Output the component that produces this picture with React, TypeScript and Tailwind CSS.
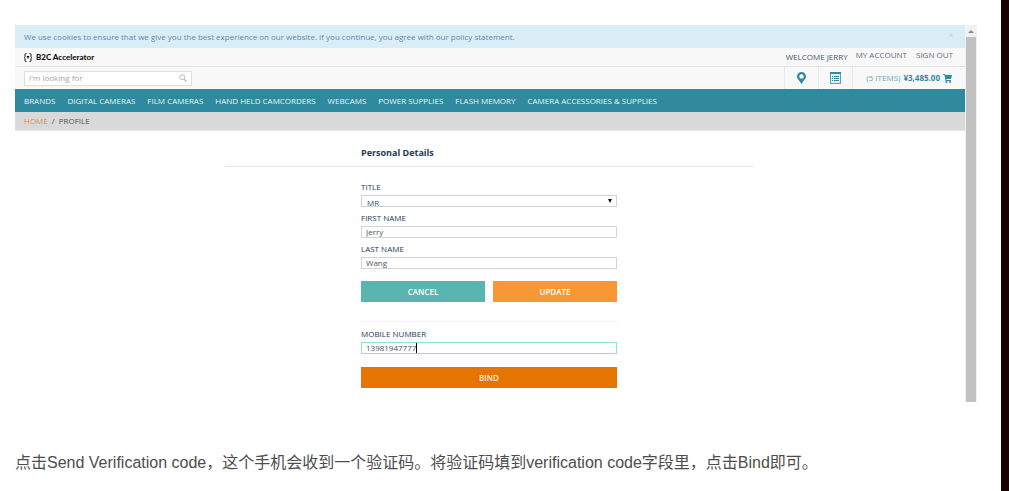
import React, { useState } from 'react';

const categories = [
  'BRANDS',
  'DIGITAL CAMERAS',
  'FILM CAMERAS',
  'HAND HELD CAMCORDERS',
  'WEBCAMS',
  'POWER SUPPLIES',
  'FLASH MEMORY',
  'CAMERA ACCESSORIES & SUPPLIES',
];

const LogoIcon: React.FC = () => (
  <svg viewBox="0 0 16 18" className="w-2 h-[9px]" fill="none" stroke="#111" strokeWidth="2">
    <path d="M5 1H4Q2 1 2 3V7L1 9L2 11V15Q2 17 4 17H5M11 1H12Q14 1 14 3V7L15 9L14 11V15Q14 17 12 17H11" />
    <path d="M5 6H11L8 12Z" fill="#111" stroke="none" />
  </svg>
);

const SearchIcon: React.FC = () => (
  <svg viewBox="0 0 16 16" className="w-2 h-2" fill="none" stroke="#b5b5b5" strokeWidth="1.8">
    <circle cx="6.500" cy="6.500" r="5" />
    <path d="M10.200 10.200L15 15" strokeWidth="2.400" />
  </svg>
);

const PinIcon: React.FC = () => (
  <svg viewBox="0 0 18 24" className="w-[9px] h-3" fill="#2f8a9f">
    <path fillRule="evenodd" d="M9 0A9 9 0 0 0 0 9C0 14 6 18 9 24C12 18 18 14 18 9A9 9 0 0 0 9 0ZM9 4.500A4.500 4.500 0 1 1 9 13.500A4.500 4.500 0 0 1 9 4.500Z" />
  </svg>
);

const ListIcon: React.FC = () => (
  <svg viewBox="0 0 22 24" className="w-[11px] h-3">
    <rect x="1" y="1" width="20" height="22" fill="#e3f0f3" stroke="#5aa2b3" strokeWidth="2" />
    <rect width="22" height="4" fill="#2f8a9f" />
    <path d="M4 9H6M4 13H6M4 17H6M8 9H18M8 13H18M8 17H18" stroke="#2f8a9f" strokeWidth="2" />
  </svg>
);

const CartIcon: React.FC = () => (
  <svg viewBox="0 0 18 18" className="w-[9px] h-[9px]" fill="#2f8a9f">
    <path d="M0 0H4L5 2H18L16 10H6.500L7 12H16V14H5L3 2H0Z" />
    <circle cx="7" cy="16" r="2" />
    <circle cx="14" cy="16" r="2" />
  </svg>
);

interface FieldProps {
  id: string;
  label: string;
  children: React.ReactNode;
}

const Field: React.FC<FieldProps> = ({ id, label, children }) => (
  <div className="flex flex-col">
    <label htmlFor={id} className="h-[17px] leading-[18px] text-[#1f3a55]">{label}</label>
    {children}
  </div>
);

const inputClass = 'block w-full h-3 px-1 pb-[2px] border bg-white leading-[10px] text-[#44525f] outline-none';

const Header: React.FC = () => (
  <header>
    <div className="flex items-center justify-between h-[23px] pl-[9px] pr-3 bg-[#d9edf7] text-[#5f8aa8]">
      <p>We use cookies to ensure that we give you the best experience on our website. If you continue, you agree with our policy statement.</p>
      <button type="button" aria-label="Close" className="pb-1 text-[#b3cbd9]">×</button>
    </div>
    <div className="flex items-center justify-between h-[19px] pl-[9px] pr-3 bg-[#f8f8f8] border-b border-[#e3e3e3]">
      <a href="#" className="flex items-center gap-1 font-['Lato'] font-black text-[#111]">
        <LogoIcon />
        B2C Accelerator
      </a>
      <div className="flex items-center text-[#5d6b7c]">
        <span className="text-[#44566a]">WELCOME JERRY</span>
        <a href="#" className="ml-2 pb-1">MY ACCOUNT</a>
        <a href="#" className="ml-[9px] pb-1">SIGN OUT</a>
      </div>
    </div>
    <div className="flex items-stretch justify-between h-[22px] pl-[9px] bg-[#f8f8f8]">
      <div className="flex items-center self-center w-[168px] h-[15px] px-1 border border-[#dedede] bg-white">
        <input
          type="text"
          aria-label="Search"
          placeholder="I'm looking for"
          className="flex-1 min-w-0 h-[13px] pb-[2px] outline-none placeholder:text-[#a5a5a5]"
        />
        <button type="button" aria-label="Submit search"><SearchIcon /></button>
      </div>
      <div className="flex text-[#2f8a9f]">
        <a href="#" aria-label="Store finder" className="flex items-center justify-center w-[34px] border-l border-[#e8e8e8]"><PinIcon /></a>
        <a href="#" aria-label="Quick order" className="flex items-center justify-center w-[34px] border-l border-[#e8e8e8]"><ListIcon /></a>
        <a href="#" className="flex items-center justify-end gap-[3px] w-[113px] pr-[13px] border-l border-[#e8e8e8]">
          <span className="text-[#65a8b8]">(5 ITEMS)</span>
          <span className="font-bold">¥3,485.00</span>
          <CartIcon />
        </a>
      </div>
    </div>
    <nav className="flex items-center gap-3 h-[23px] px-[9px] bg-[#2f8a9f] text-[#e6f3f5] whitespace-nowrap">
      {categories.map(c => <a key={c} href="#">{c}</a>)}
    </nav>
    <div className="flex items-center gap-1 h-[19px] px-[9px] bg-[#d9d9d9] border-b border-[#e6e6e6] text-[#555]">
      <a href="#" className="text-[#e98936]">HOME</a>
      <span>/</span>
      <span>PROFILE</span>
    </div>
  </header>
);

const ProfileForm: React.FC = () => {
  const [title, setTitle] = useState('MR');
  const [firstName, setFirstName] = useState('Jerry');
  const [lastName, setLastName] = useState('Wang');
  const [mobile, setMobile] = useState('13981947777');

  return (
    <main className="w-[530px] max-w-full mx-auto pr-0.5 pb-[14px]">
      <div className="h-9 pt-[13px] border-b border-[#e4e4e4]">
        <h1 className="w-64 mx-auto leading-[18px] font-bold text-[9px] text-[#1f3a55]">Personal Details</h1>
      </div>
      <form className="w-64 mx-auto pt-[11px]" onSubmit={e => e.preventDefault()}>
        <div className="flex flex-col gap-0.5">
          <Field id="title" label="TITLE">
            <div className="relative h-3">
              <select
                id="title"
                value={title}
                onChange={e => setTitle(e.target.value)}
                className="block appearance-none w-full h-3 pl-[5px] pt-[2px] border border-[#d3d3d3] bg-white leading-[10px] text-[#44525f] outline-none overflow-hidden"
              >
                <option>MR</option>
                <option>MRS</option>
              </select>
              <svg viewBox="0 0 4 4" className="absolute right-[5px] top-1 w-1 h-1 pointer-events-none" fill="#111"><path d="M0 0H4L2 4Z" /></svg>
            </div>
          </Field>
          <Field id="firstName" label="FIRST NAME">
            <input id="firstName" type="text" value={firstName} onChange={e => setFirstName(e.target.value)} className={`${inputClass} border-[#d3d3d3]`} />
          </Field>
          <Field id="lastName" label="LAST NAME">
            <input id="lastName" type="text" value={lastName} onChange={e => setLastName(e.target.value)} className={`${inputClass} border-[#d3d3d3]`} />
          </Field>
        </div>
        <div className="grid grid-cols-2 gap-2 mt-3 font-semibold text-white">
          <button type="button" className="h-[21px] bg-[#5ab4b0]">CANCEL</button>
          <button type="submit" className="h-[21px] bg-[#f89834]">UPDATE</button>
        </div>
        <div className="mt-[19px] pt-[3px] border-t border-[#f1f1f1]">
          <Field id="mobile" label="MOBILE NUMBER">
            <div className="relative">
              <input
                id="mobile"
                type="text"
                value={mobile}
                onChange={e => setMobile(e.target.value)}
                className={`${inputClass} border-[#8fe0dc]`}
              />
              <span className="absolute left-[55px] top-px w-px h-[10px] bg-black" />
            </div>
          </Field>
        </div>
        <button type="button" className="block w-full h-[21px] mt-[13px] bg-[#e57500] font-semibold text-[#fbe9d5]">BIND</button>
      </form>
    </main>
  );
};

const App: React.FC = () => (
  <div className="flex min-h-screen bg-white">
    <div className="flex-1 min-w-0 pt-[25px] pl-[15px] pr-6">
      <div className="flex font-['Open_Sans',sans-serif] text-[8px] leading-[12px]">
        <div className="flex-1 min-w-0">
          <Header />
          <ProfileForm />
        </div>
        <div className="flex flex-col w-3 bg-[#f1f1f1]">
          <div className="flex items-center justify-center h-3">
            <svg viewBox="0 0 6 3" className="w-[6px] h-[3px]" fill="#8c8c8c"><path d="M3 0L6 3H0Z" /></svg>
          </div>
          <div className="flex-1 mx-px bg-[#c1c1c1]" />
        </div>
      </div>
      <p className="mt-12 font-['Liberation_Sans','Noto_Sans_CJK_SC',sans-serif] text-[16px] leading-[26px] text-[#4d4d4d]">
        点击Send Verification code，这个手机会收到一个验证码。将验证码填到verification code字段里，点击Bind即可。
      </p>
    </div>
    <div className="w-2 bg-[#160200]" />
  </div>
);

export default App;
